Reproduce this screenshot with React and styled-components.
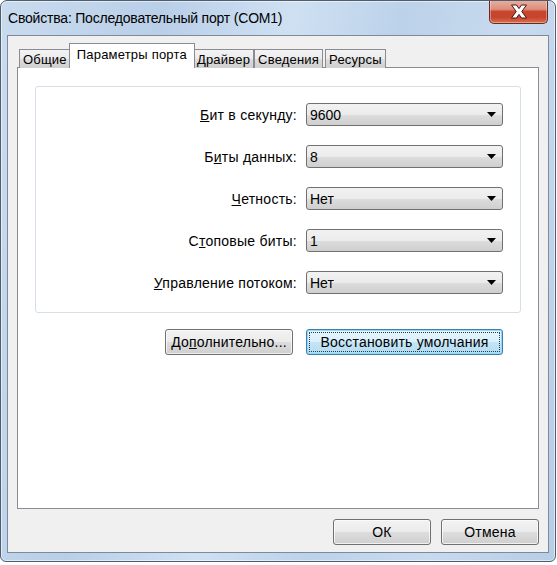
import React from "react";
import styled, { createGlobalStyle, css } from "styled-components";

const Global = createGlobalStyle`
  html, body { margin: 0; padding: 0; background: #ffffff; }
  body { font-family: "Liberation Sans", Arial, sans-serif; }
  * { box-sizing: border-box; }
`;

const Window = styled.div`
  width: 556px;
  height: 562px;
  display: flex;
  flex-direction: column;
  border: 1px solid #4f5d6e;
  border-radius: 7px 7px 6px 6px;
  background: linear-gradient(100deg, #c9dbee 0%, #b9cfe8 25%, #cfe0f2 45%, #bcd2ea 62%, #c8daee 80%, #b7cde6 100%);
  box-shadow: inset 0 0 0 1px rgba(255,255,255,0.55);
  overflow: hidden;
`;

const TitleBar = styled.div`
  height: 34px;
  flex: none;
  display: flex;
  align-items: flex-start;
  justify-content: space-between;
  padding-left: 7px;
`;

const Title = styled.div`
  font-family: "Liberation Sans", Arial, sans-serif;
  font-size: 14px;
  letter-spacing: -0.2px;
  color: #000;
  padding-top: 9px;
`;

const CloseButton = styled.div`
  width: 59px;
  height: 24px;
  margin-top: -1px;
  margin-right: 7px;
  border: 1px solid #6a2a22;
  border-top: none;
  border-radius: 0 0 5px 5px;
  background: linear-gradient(#eab0a2 0%, #dd8f7b 40%, #c8462f 50%, #c7442e 75%, #d9704f 100%);
  box-shadow: inset 0 0 0 1px rgba(255,255,255,0.35);
  display: flex;
  align-items: center;
  justify-content: center;
`;

const Client = styled.div`
  flex: 1;
  margin: 0 6px 8px 6px;
  border: 1px solid #7d8a99;
  background: #f0f0f0;
  display: flex;
  flex-direction: column;
  padding: 7px 9px 7px 9px;
`;

const TabStrip = styled.div`
  display: flex;
  align-items: flex-end;
  height: 25px;
  padding-left: 2px;
  position: relative;
  z-index: 1;
  margin-bottom: -1px;
`;

const Tab = styled.div`
  font-size: 13px;
  letter-spacing: 0.2px;
  color: #000;
  border: 1px solid #898c95;
  border-bottom: none;
  height: 19px;
  padding: 1px 3px 0 3px;
  display: flex;
  align-items: center;
  background: linear-gradient(#f3f3f3 0%, #ebebeb 50%, #dddddd 51%, #cfcfcf 100%);
  margin-right: ${p => p.$gap || 0}px;
  ${p => p.$active && css`
    height: 25px;
    background: #ffffff;
    margin: 0 -2px;
    padding: 0 7px 4px 7px;
    position: relative;
    z-index: 2;
  `}
`;

const Panel = styled.div`
  flex: 1;
  background: #ffffff;
  border: 1px solid #898c95;
  padding: 18px 17px 0 17px;
  display: flex;
  flex-direction: column;
`;

const Group = styled.div`
  border: 1px solid #d5dfe5;
  border-radius: 3px;
  padding: 16px 17px 18px 0;
  display: flex;
  flex-direction: column;
  gap: 19px;
`;

const Row = styled.div`
  display: flex;
  align-items: center;
  justify-content: flex-end;
  gap: 9px;
`;

const Label = styled.label`
  font-size: 14px;
  letter-spacing: 0.25px;
  color: #000;
  u { text-decoration: underline; }
`;

const Combo = styled.div`
  width: 197px;
  height: 23px;
  border: 1px solid #707070;
  border-radius: 3px;
  background: linear-gradient(#f2f2f2 0%, #ebebeb 50%, #dddddd 51%, #cfcfcf 100%);
  display: flex;
  align-items: center;
  justify-content: space-between;
  padding: 0 6px 0 3px;
  font-size: 14px;
  color: #000;
`;

const ButtonRow = styled.div`
  display: flex;
  justify-content: flex-end;
  gap: ${p => p.$gap}px;
  padding-right: ${p => p.$right || 0}px;
  margin-top: ${p => p.$top || 0}px;
`;

const Button = styled.div`
  width: ${p => p.$w}px;
  height: 26px;
  border: 1px solid #707070;
  border-radius: 3px;
  background: linear-gradient(#f2f2f2 0%, #ebebeb 50%, #dddddd 51%, #cfcfcf 100%);
  box-shadow: inset 0 0 0 1px rgba(255,255,255,0.7);
  font-size: 14px;
  letter-spacing: 0.2px;
  color: #000;
  display: flex;
  align-items: center;
  justify-content: center;
  ${p => p.$default && css`
    border-color: #3c7fb1;
    padding: 2px;
    background: linear-gradient(#e8f5fc 0%, #d9f0fc 50%, #c4e5f6 51%, #b2dcf2 100%);
    box-shadow: inset 0 0 0 1px #8fdaf6;
  `}
`;

const FocusRect = styled.span`
  flex: 1;
  align-self: stretch;
  display: flex;
  align-items: center;
  justify-content: center;
  border: 1px dotted #2a3a4a;
  border-radius: 1px;
`;

const Arrow = () => (
  <svg width="9" height="5" viewBox="0 0 9 5">
    <path d="M0 0 H9 L4.5 5 Z" fill="#000" />
  </svg>
);

const rows = [
  { pre: "", u: "Б", post: "ит в секунду:", value: "9600" },
  { pre: "Б", u: "и", post: "ты данных:", value: "8" },
  { pre: "", u: "Ч", post: "етность:", value: "Нет" },
  { pre: "С", u: "т", post: "оповые биты:", value: "1" },
  { pre: "", u: "У", post: "правление потоком:", value: "Нет" },
];

export default function App() {
  return (
    <>
      <Global />
      <Window>
        <TitleBar>
          <Title>Свойства: Последовательный порт (COM1)</Title>
          <CloseButton>
            <svg width="18" height="15" viewBox="0 0 18 15">
              <path d="M1.5 1 H6.5 L9 4.6 L11.5 1 H16.5 L11.8 7.5 L16.5 14 H11.5 L9 10.4 L6.5 14 H1.5 L6.2 7.5 Z"
                fill="#ffffff" stroke="#4a1710" strokeWidth="1" strokeLinejoin="round" />
            </svg>
          </CloseButton>
        </TitleBar>
        <Client>
          <TabStrip>
            <Tab>Общие</Tab>
            <Tab $active>Параметры порта</Tab>
            <Tab>Драйвер</Tab>
            <Tab $gap={2}>Сведения</Tab>
            <Tab>Ресурсы</Tab>
          </TabStrip>
          <Panel>
            <Group>
              {rows.map((r, i) => (
                <Row key={i}>
                  <Label>{r.pre}<u>{r.u}</u>{r.post}</Label>
                  <Combo>
                    <span>{r.value}</span>
                    <Arrow />
                  </Combo>
                </Row>
              ))}
            </Group>
            <ButtonRow $gap={13} $right={18} $top={16}>
              <Button $w={128}>До<u>п</u>олнительно...</Button>
              <Button $w={197} $default><FocusRect>Восстановить умолчания</FocusRect></Button>
            </ButtonRow>
          </Panel>
          <ButtonRow $gap={10} $top={10}>
            <Button $w={98}>ОК</Button>
            <Button $w={98}>Отмена</Button>
          </ButtonRow>
        </Client>
      </Window>
    </>
  );
}
